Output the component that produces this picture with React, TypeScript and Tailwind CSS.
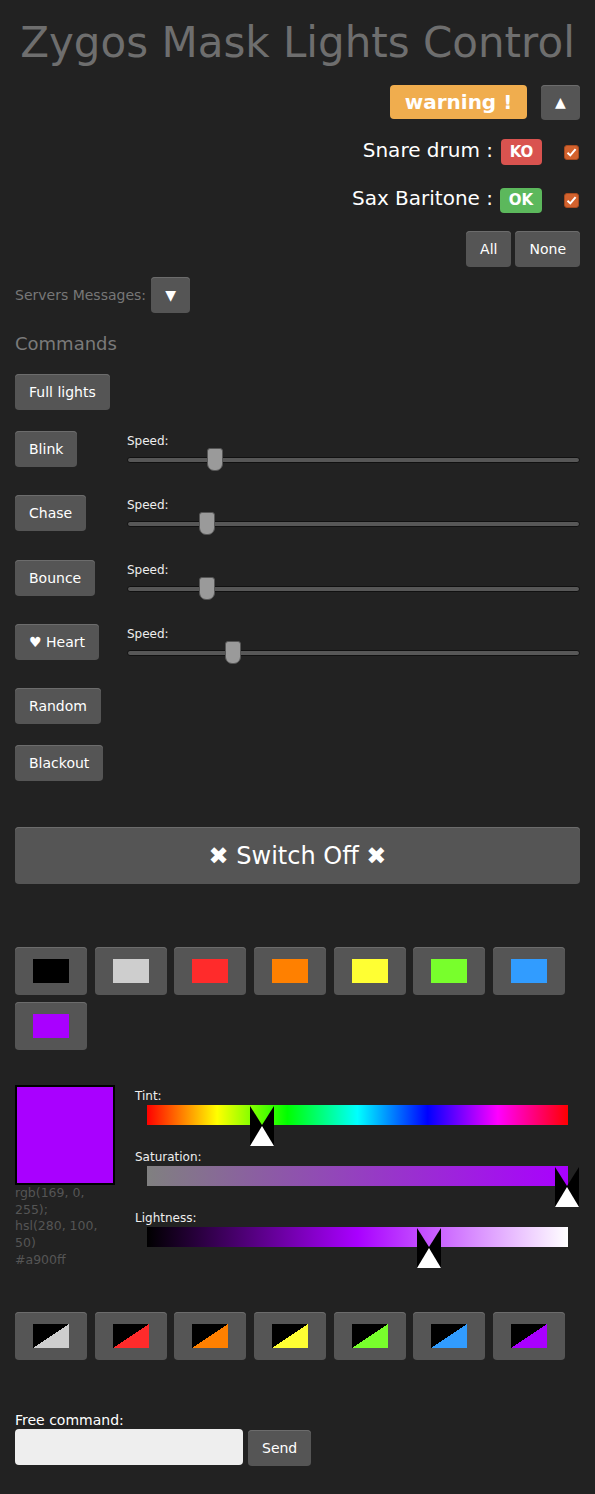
import React from 'react';

// Zygos mask lights control panel (static recreation)

const btn = 'bg-[#555] rounded-[4px] shadow-[inset_0_1px_0_#6c6c6c] text-white';

const colors = [
  'bg-[#000000]',
  'bg-[#cecece]',
  'bg-[#ff2b2b]',
  'bg-[#ff8000]',
  'bg-[#ffff33]',
  'bg-[#78ff2c]',
  'bg-[#319cff]',
  'bg-[#a900ff]',
];

const duos = [
  'bg-[linear-gradient(to_bottom_right,#000_50%,#cecece_50%)]',
  'bg-[linear-gradient(to_bottom_right,#000_50%,#ff2b2b_50%)]',
  'bg-[linear-gradient(to_bottom_right,#000_50%,#ff8000_50%)]',
  'bg-[linear-gradient(to_bottom_right,#000_50%,#ffff33_50%)]',
  'bg-[linear-gradient(to_bottom_right,#000_50%,#78ff2c_50%)]',
  'bg-[linear-gradient(to_bottom_right,#000_50%,#319cff_50%)]',
  'bg-[linear-gradient(to_bottom_right,#000_50%,#a900ff_50%)]',
];

interface Command {
  label: string;
  row: string;
  speed?: number; // thumb offset in px along the track
}

const commands: Command[] = [
  { label: 'Full lights', row: 'h-[57px]' },
  { label: 'Blink', row: 'h-[64px]', speed: 80 },
  { label: 'Chase', row: 'h-[65px]', speed: 72 },
  { label: 'Bounce', row: 'h-[64px]', speed: 72 },
  { label: '♥ Heart', row: 'h-[64px]', speed: 98 },
  { label: 'Random', row: 'h-[57px]' },
  { label: 'Blackout', row: 'h-[36px]' },
];

const pickers = [
  { label: 'Tint:', bar: 'bg-[linear-gradient(to_right,#ff0000,#ffff00,#00ff00,#00ffff,#0000ff,#ff00ff,#ff0000)]', pos: 103 },
  { label: 'Saturation:', bar: 'bg-[linear-gradient(to_right,#808080,#a900ff)]', pos: 408 },
  { label: 'Lightness:', bar: 'bg-[linear-gradient(to_right,#000000,#a900ff_50%,#ffffff)]', pos: 270 },
];

function Checkbox() {
  return (
    <div className="w-[15px] h-[15px] rounded-[3px] bg-[#d2622e] border border-[#a84a1f] flex items-center justify-center">
      <svg width="11" height="11" viewBox="0 0 11 11">
        <path d="M1.5 5.8 L4.3 8.4 L9.6 2.2" fill="none" stroke="#fff" strokeWidth="2" />
      </svg>
    </div>
  );
}

function Thumb({ left }: { left: number }) {
  return (
    <svg width="24" height="40" viewBox="0 0 24 40" className="absolute top-[1px]" style={{ left }}>
      <polygon points="0,0 12,19 0,20" fill="#000" />
      <polygon points="24,0 24,20 12,19" fill="#000" />
      <rect x="0" y="19" width="24" height="21" fill="#000" />
      <polygon points="12,20 24,40 0,40" fill="#fff" />
    </svg>
  );
}

export default function App() {
  return (
    <div className="min-h-[1494px] bg-[#222] px-[15px] font-['DejaVu_Sans',sans-serif]">
      <h1 className="pt-[18px] text-center text-[42px] leading-[49px] text-[#6e6e6e]">
        Zygos Mask Lights Control
      </h1>

      <div className="mt-[18px] flex justify-end items-start gap-[14px]">
        <span className="w-[137px] h-[34px] rounded-[4px] bg-[#f0ad4e] text-white font-bold text-[20px] leading-[23px] flex items-center justify-center">
          warning !
        </span>
        <button className={`${btn} w-[39px] h-[35px] text-[14px] flex items-center justify-center`}>▲</button>
      </div>

      <div className="mt-[19px] flex justify-end items-center h-[26px] pr-px">
        <span className="text-white text-[20px] leading-[23px] pb-[3px]">Snare drum :</span>
        <span className="ml-[8px] w-[41px] h-[26px] rounded-[4px] bg-[#d9534f] text-white font-bold text-[15px] flex items-center justify-center">
          KO
        </span>
        <div className="ml-[22px]">
          <Checkbox />
        </div>
      </div>

      <div className="mt-[22px] flex justify-end items-center h-[26px] pr-px">
        <span className="text-white text-[20px] leading-[23px] pb-[3px]">Sax Baritone :</span>
        <span className="ml-[7px] w-[42px] h-[25px] rounded-[4px] bg-[#5cb85c] text-white font-bold text-[15px] flex items-center justify-center">
          OK
        </span>
        <div className="ml-[22px]">
          <Checkbox />
        </div>
      </div>

      <div className="mt-[18px] flex justify-end gap-[4px]">
        <button className={`${btn} h-[36px] px-[14px] text-[14px]`}>All</button>
        <button className={`${btn} h-[36px] px-[14px] text-[14px]`}>None</button>
      </div>

      <div className="mt-[10px] flex items-center gap-[5px]">
        <span className="text-[14px] leading-[16px] text-[#777]">Servers Messages:</span>
        <button className={`${btn} w-[39px] h-[36px] text-[14px] flex items-center justify-center`}>▼</button>
      </div>

      <h2 className="mt-[20px] text-[18px] leading-[21px] text-[#7a7a7a]">Commands</h2>

      <div className="mt-[20px]">
        {commands.map(c => (
          <div key={c.label} className={`${c.row} flex items-start`}>
            <div className="w-[112px] shrink-0">
              <button className={`${btn} h-[36px] px-[14px] text-[14px]`}>{c.label}</button>
            </div>
            {c.speed !== undefined && (
              <div className="flex-1 pt-[3px]">
                <div className="text-[12px] leading-[14px] text-[#eee]">Speed:</div>
                <div className="relative h-[24px]">
                  <div className="absolute left-0 right-0 top-[9px] h-[6px] rounded-full bg-[#575757] border border-[#111]" />
                  <div
                    className="absolute top-0 w-[16px] h-[23px] bg-[#9a9a9a] border border-[#555] rounded-t-[3px] rounded-b-[7px]"
                    style={{ left: c.speed }}
                  />
                </div>
              </div>
            )}
          </div>
        ))}
      </div>

      <button className={`${btn} mt-[46px] w-full h-[57px] text-[24px] flex items-center justify-center`}>
        ✖ Switch Off ✖
      </button>

      <div className="mt-[63px] flex flex-wrap gap-x-[7.7px] gap-y-[7px]">
        {colors.map(c => (
          <button key={c} className={`${btn} w-[72px] h-[48px] flex items-center justify-center`}>
            <span className={`${c} block w-[36px] h-[24px]`} />
          </button>
        ))}
      </div>

      <div className="mt-[35px] flex h-[183px]">
        <div className="w-[100px] shrink-0">
          <div className="w-[100px] h-[100px] border-2 border-black bg-[#a900ff]" />
          <div className="text-[12.5px] leading-[16.7px] text-[#555]">
            <div>rgb(169, 0, 255);</div>
            <div>hsl(280, 100, 50)</div>
            <div>#a900ff</div>
          </div>
        </div>
        <div className="ml-[20px] flex-1">
          {pickers.map(p => (
            <div key={p.label} className="h-[61px]">
              <div className="h-[20px] pt-[4px] text-[12px] leading-[14px] text-[#eee]">{p.label}</div>
              <div className={`${p.bar} relative ml-[12px] w-[421px] h-[20px]`}>
                <Thumb left={p.pos} />
              </div>
            </div>
          ))}
        </div>
      </div>

      <div className="mt-[44px] flex flex-wrap gap-x-[7.7px]">
        {duos.map(c => (
          <button key={c} className={`${btn} w-[72px] h-[48px] flex items-center justify-center`}>
            <span className={`${c} block w-[36px] h-[24px]`} />
          </button>
        ))}
      </div>

      <div className="mt-[52px] text-[14px] leading-[16px] text-white">Free command:</div>
      <div className="mt-px flex items-start gap-[5px]">
        <input className="w-[228px] h-[36px] rounded-[4px] bg-[#eee] outline-none px-2 text-[14px]" />
        <button className={`${btn} mt-px h-[36px] px-[14px] text-[14px]`}>Send</button>
      </div>
    </div>
  );
}
